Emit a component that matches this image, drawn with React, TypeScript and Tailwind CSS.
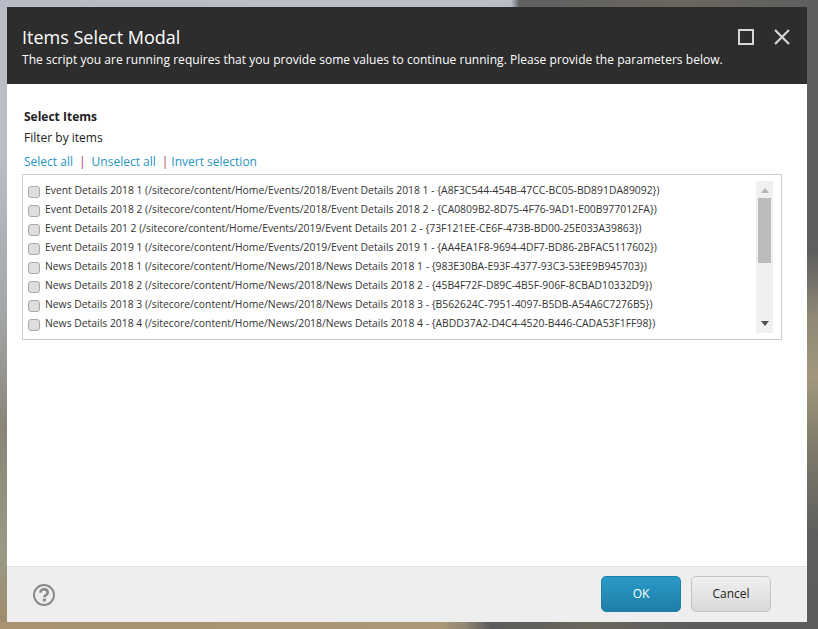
import React from "react";

const items = [
  "Event Details 2018 1 (/sitecore/content/Home/Events/2018/Event Details 2018 1 - {A8F3C544-454B-47CC-BC05-BD891DA89092})",
  "Event Details 2018 2 (/sitecore/content/Home/Events/2018/Event Details 2018 2 - {CA0809B2-8D75-4F76-9AD1-E00B977012FA})",
  "Event Details 201 2 (/sitecore/content/Home/Events/2019/Event Details 201 2 - {73F121EE-CE6F-473B-BD00-25E033A39863})",
  "Event Details 2019 1 (/sitecore/content/Home/Events/2019/Event Details 2019 1 - {AA4EA1F8-9694-4DF7-BD86-2BFAC5117602})",
  "News Details 2018 1 (/sitecore/content/Home/News/2018/News Details 2018 1 - {983E30BA-E93F-4377-93C3-53EE9B945703})",
  "News Details 2018 2 (/sitecore/content/Home/News/2018/News Details 2018 2 - {45B4F72F-D89C-4B5F-906F-8CBAD10332D9})",
  "News Details 2018 3 (/sitecore/content/Home/News/2018/News Details 2018 3 - {B562624C-7951-4097-B5DB-A54A6C7276B5})",
  "News Details 2018 4 (/sitecore/content/Home/News/2018/News Details 2018 4 - {ABDD37A2-D4C4-4520-B446-CADA53F1FF98})",
];

export default function App() {
  return (
    <div className="h-[629px] w-[818px] overflow-hidden p-[7px] pr-[11px] font-['Open_Sans',sans-serif] [background:linear-gradient(90deg,#a8926f_0%,#ab9877_54%,#8d8472_57%,#5c5c5c_60%,#6a665c_72%,#5c5c5c_85%,#5c5c5c_100%)_bottom/100%_7px_no-repeat,linear-gradient(90deg,#b6bbc6_0%,#bcbfc8_50%,#b8bdc8_62.5%,#606060_63.5%,#6b675f_84%,#5e5e5e_100%)_top/100%_7px_no-repeat,linear-gradient(180deg,#5e5e5e_0%,#5e5e5e_40%,#8f8675_50%,#a3977f_60%,#7d7869_72%,#5e5e5e_85%,#5c5c5c_100%)_right/11px_100%_no-repeat,linear-gradient(180deg,#b8bdc8_0%,#b8bdc8_25%,#a4a7a8_50%,#8a8578_68%,#9a9a85_88%,#a08a68_100%)_left/7px_100%_no-repeat]">
      <div className="flex h-[615px] w-[800px] flex-col bg-white">
        <div className="h-[77px] bg-[#2d2d2d] pl-[15px] pr-[17px] pt-[16px] text-white">
          <div className="flex items-start justify-between">
            <h1 className="text-[18px] leading-[28px]">Items Select Modal</h1>
            <div className="flex items-center gap-[20px] pt-[6px]">
              <span className="block h-[16px] w-[16px] border-2 border-[#d6d6d6]" />
              <svg width="16" height="16" viewBox="0 0 16 16" fill="none" stroke="#d6d6d6" strokeWidth="2.2">
                <path d="M1 1l14 14M15 1L1 15" />
              </svg>
            </div>
          </div>
          <p className="text-[12px] leading-[18px] tracking-[0.04px]">
            The script you are running requires that you provide some values to continue running. Please provide the parameters below.
          </p>
        </div>

        <div className="flex-1 pl-[15px] pr-[25px] pt-[24px] text-[12px] text-[#212121]">
          <div className="pl-[2px] font-bold leading-[18px]">Select Items</div>
          <div className="mt-[3px] pl-[2px] leading-[18px]">Filter by items</div>
          <div className="mt-[6px] flex pl-[2px] leading-[18px] text-[#2694c0]">
            <span>Select all</span>
            <span className="mx-[6px] text-[#a83c5e]">|</span>
            <span>Unselect all</span>
            <span className="ml-[6px] mr-[3px] text-[#a83c5e]">|</span>
            <span>Invert selection</span>
          </div>
          <div className="mt-[3px] flex h-[166px] justify-between border border-[#cccccc] py-[6px] pl-[5px] pr-[8px]">
            <ul className="text-[10.37px] leading-[19px] text-[#333333]">
              {items.map((item) => (
                <li key={item} className="flex items-center whitespace-nowrap">
                  <span className="mr-[5px] mt-[2px] block h-[12px] w-[12px] rounded-[3px] border border-[#a8a8a8] bg-[#dedede]" />
                  {item}
                </li>
              ))}
            </ul>
            <div className="flex w-[17px] flex-col items-center bg-[#f0f0f0]">
              <svg className="mt-[7px]" width="8" height="5" viewBox="0 0 8 5">
                <path d="M4 0l4 5H0z" fill="#b8b8b8" />
              </svg>
              <div className="mt-[5px] h-[65px] w-[13px] bg-[#bcbcbc]" />
              <svg className="mt-auto mb-[7px]" width="8" height="5" viewBox="0 0 8 5">
                <path d="M0 0h8L4 5z" fill="#505050" />
              </svg>
            </div>
          </div>
        </div>

        <div className="flex h-[56px] items-center justify-between border-t border-[#e2e2e2] bg-[#eeeeee] pl-[26px] pr-[36px]">
          <svg width="22" height="22" viewBox="0 0 22 22" fill="none">
            <circle cx="11" cy="11" r="10" stroke="#8a8a8a" strokeWidth="2" />
            <path d="M7.4 8.8C7.4 6.4 9 5.3 11 5.3s3.7 1.1 3.7 3.1c0 2.8-3.3 2.4-3.3 4.8" stroke="#8a8a8a" strokeWidth="2.6" />
            <rect x="9.8" y="14.6" width="3.2" height="2.8" fill="#8a8a8a" />
          </svg>
          <div className="mb-[2px] flex gap-[10px] text-[12px]">
            <button className="h-[36px] w-[80px] rounded-[5px] border border-[#1f7fa6] bg-gradient-to-b from-[#2a9aca] to-[#1f7ea6] text-white">OK</button>
            <button className="h-[36px] w-[80px] rounded-[5px] border border-[#c4c4c4] bg-gradient-to-b from-[#f0f0f0] to-[#d9d9d9] text-[#212121]">Cancel</button>
          </div>
        </div>
      </div>
    </div>
  );
}
